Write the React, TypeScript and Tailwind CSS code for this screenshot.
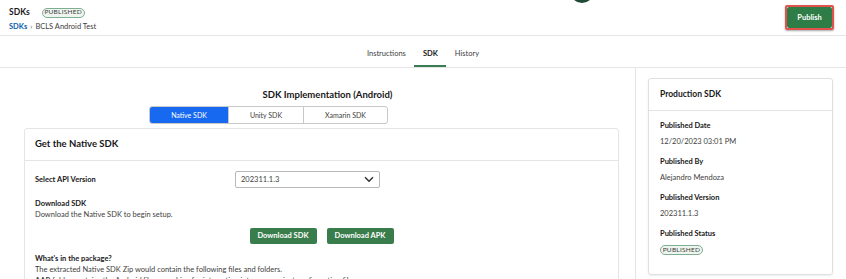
import React from 'react';

const font = { fontFamily: 'Lato, "Open Sans", sans-serif' };

function Badge() {
  return (
    <span className="inline-flex items-center justify-center h-[10px] w-[43px] rounded-full border border-[#7fae91] bg-[#eef5f0] text-[6.5px] leading-none tracking-[0.04em] text-[#3e3e3c]">
      PUBLISHED
    </span>
  );
}

function Field({ label, children }: { label: string; children: React.ReactNode }) {
  return (
    <div className="mb-[8px]">
      <div className="text-[7.5px] font-bold text-[#181818] leading-[12px]">{label}</div>
      <div className="mt-[4px] text-[7.5px] text-[#3e3e3c] leading-[12px]">{children}</div>
    </div>
  );
}

export default function App() {
  const tabs = ['Instructions', 'SDK', 'History'];
  const segs = ['Native SDK', 'Unity SDK', 'Xamarin SDK'];
  return (
    <div className="w-[846px] h-[279px] overflow-hidden bg-white text-[#181818]" style={font}>
      {/* header */}
      <div className="relative h-[36px] border-b border-[#e5e5e5] flex items-start justify-between pl-[9px] pr-[12px]">
        <div className="pt-[7px]">
          <div className="flex items-center gap-[12px]">
            <span className="text-[8.5px] font-bold leading-[11px]">SDKs</span>
            <Badge />
          </div>
          <div className="flex items-center gap-[3px] mt-[3px] text-[7.5px] leading-[11px]">
            <span className="text-[#0b5cab] font-bold">SDKs</span>
            <span className="text-[#5c5c5c]">›</span>
            <span className="text-[#3e3e3c]">BCLS Android Test</span>
          </div>
        </div>
        <div className="absolute left-[570px] top-[-21px] w-[24px] h-[24px] rounded-full bg-[#1f4a33]" />
        <div className="mt-[5px] border-2 border-[#e0524c] rounded-[2px] shadow-[0_1px_2px_rgba(0,0,0,0.35)]">
          <button className="block h-[21px] w-[45px] bg-[#2e7d46] text-white text-[7.5px] font-bold rounded-[2px]">
            Publish
          </button>
        </div>
      </div>

      {/* tabs */}
      <div className="h-[32px] border-b border-[#e5e5e5] flex justify-center">
        <div className="flex items-stretch">
          {tabs.map((t) => (
            <div
              key={t}
              className={`px-[8.5px] pt-[6px] flex items-center text-[7.5px] ${
                t === 'SDK' ? 'text-[#181818] font-bold border-b-2 border-[#3a7d55]' : 'text-[#3e3e3c] border-b-2 border-transparent'
              }`}
            >
              {t}
            </div>
          ))}
        </div>
      </div>

      {/* body */}
      <div className="flex">
        <div className="w-[636px] border-r border-[#e5e5e5] h-[211px] pl-[24px] pr-[16px]">
          <div className="text-center text-[9.5px] font-bold pt-[20px] leading-[13px] pl-[12px]">SDK Implementation (Android)</div>
          <div className="flex mt-[5px] pl-[125px]">
            <div className="flex border border-[#c9c9c9] rounded-[3px] overflow-hidden h-[18px]">
              {segs.map((s, i) => (
                <div
                  key={s}
                  className={`flex items-center justify-center text-[7px] ${
                    i === 0 ? 'w-[78px] bg-[#1769f0] text-white' : i === 1 ? 'w-[75px] text-[#3e3e3c] border-l border-[#c9c9c9]' : 'w-[84px] text-[#3e3e3c] border-l border-[#c9c9c9]'
                  }`}
                >
                  {s}
                </div>
              ))}
            </div>
          </div>
          <div className="mt-[4px] border border-[#e5e5e5] rounded-[3px] h-[200px]">
            <div className="h-[32px] border-b border-[#e5e5e5] flex items-center px-[10px] text-[9.5px] font-bold">
              Get the Native SDK
            </div>
            <div className="px-[10px]">
              <div className="flex items-center mt-[10px]">
                <div className="w-[200px] text-[7.5px] font-bold">Select API Version</div>
                <div className="w-[145px] h-[17px] border border-[#b8b8b8] rounded-[2px] flex items-center justify-between px-[5px] text-[7.5px] text-[#3e3e3c]">
                  <span>202311.1.3</span>
                  <svg width="10" height="7" viewBox="0 0 10 7" fill="none">
                    <path d="M1 1.2 5 5.2 9 1.2" stroke="#333" strokeWidth="1.5" />
                  </svg>
                </div>
              </div>
              <div className="mt-[10px] text-[7.5px] font-bold leading-[11px]">Download SDK</div>
              <div className="text-[7.5px] text-[#3e3e3c] leading-[11px]">Download the Native SDK to begin setup.</div>
              <div className="flex justify-center gap-[10px] mt-[8px]">
                <button className="h-[16px] w-[67px] bg-[#3a7d4c] text-white text-[7.5px] font-bold rounded-[2px]">Download SDK</button>
                <button className="h-[16px] w-[67px] bg-[#3a7d4c] text-white text-[7.5px] font-bold rounded-[2px]">Download APK</button>
              </div>
              <div className="mt-[9px] text-[7.5px] font-bold leading-[11px]">What's in the package?</div>
              <div className="text-[7.5px] text-[#3e3e3c] leading-[11px]">
                The extracted Native SDK Zip would contain the following files and folders.
              </div>
              <div className="text-[7.5px] text-[#3e3e3c] leading-[11px]">
                <b>AAR</b> folder contains the Android library archive for integration into your project configuration files.
              </div>
            </div>
          </div>
        </div>
        <div className="flex-1 pl-[12px] pr-[13px] pt-[10px]">
          <div className="border border-[#e0e0e0] rounded-[3px] h-[197px] shadow-[0_1px_2px_rgba(0,0,0,0.08)]">
            <div className="h-[32px] border-b border-[#e5e5e5] flex items-center px-[11px] text-[8.5px] font-bold">
              Production SDK
            </div>
            <div className="px-[11px] pt-[9px]">
              <Field label="Published Date">12/20/2023 03:01 PM</Field>
              <Field label="Published By">Alejandro Mendoza</Field>
              <Field label="Published Version">202311.1.3</Field>
              <Field label="Published Status">
                <Badge />
              </Field>
            </div>
          </div>
        </div>
      </div>
    </div>
  );
}
